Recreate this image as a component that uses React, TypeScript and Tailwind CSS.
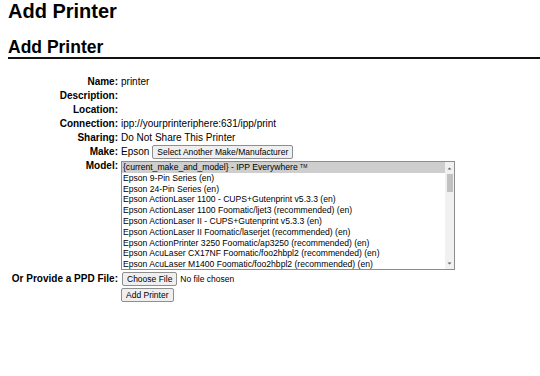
const models = [
  "Epson 9-Pin Series (en)",
  "Epson 24-Pin Series (en)",
  "Epson ActionLaser 1100 - CUPS+Gutenprint v5.3.3 (en)",
  "Epson ActionLaser 1100 Foomatic/ljet3 (recommended) (en)",
  "Epson ActionLaser II - CUPS+Gutenprint v5.3.3 (en)",
  "Epson ActionLaser II Foomatic/laserjet (recommended) (en)",
  "Epson ActionPrinter 3250 Foomatic/ap3250 (recommended) (en)",
  "Epson AcuLaser CX17NF Foomatic/foo2hbpl2 (recommended) (en)",
  "Epson AcuLaser M1400 Foomatic/foo2hbpl2 (recommended) (en)",
];

function Btn({ children }: { children: React.ReactNode }) {
  return (
    <button className="h-[14px] px-[4px] text-[8.5px] leading-[12px] text-black bg-[#efefef] border border-[#8f8f8f] rounded-[2px] whitespace-nowrap">
      {children}
    </button>
  );
}

function Row({ label, children }: { label: string; children?: React.ReactNode }) {
  return (
    <div className="flex h-[14px] items-center">
      <div className="w-[110px] text-right font-bold leading-[14px]">{label}</div>
      <div className="ml-[3px] flex items-center leading-[14px]">{children}</div>
    </div>
  );
}

export default function App() {
  return (
    <div className="w-[540px] h-[376px] overflow-hidden bg-white text-black pl-2 font-['Liberation_Sans',Arial,sans-serif] text-[10px]">
      <h1 className="text-[20px] font-bold leading-[23px]">Add Printer</h1>
      <h2 className="mt-[15px] text-[17.5px] font-bold leading-[19px] border-b-2 border-[#111]">Add Printer</h2>

      <div className="mt-[16px]">
        <Row label="Name:">printer</Row>
        <Row label="Description:" />
        <Row label="Location:" />
        <Row label="Connection:">ipp://yourprinteriphere:631/ipp/print</Row>
        <Row label="Sharing:">Do Not Share This Printer</Row>
        <Row label="Make:">
          <span>Epson</span>
          <span className="ml-[3px] flex">
            <Btn>Select Another Make/Manufacturer</Btn>
          </span>
        </Row>

        {/* model listbox */}
        <div className="flex">
          <div className="w-[110px] text-right font-bold leading-[14px]">Model:</div>
          <div className="ml-[3px] mt-[2px] flex w-[334px] h-[109px] border border-[#8c8c8c] overflow-hidden">
            <div className="flex-1 text-[8.6px] leading-[10.8px] whitespace-nowrap overflow-hidden">
              <div className="bg-[#cecece] px-[1px]">
                {"{current_make_and_model} - IPP Everywhere "}
                <sup className="text-[5px]">TM</sup>
              </div>
              {models.map((m) => (
                <div key={m} className="px-[1px]">
                  {m}
                </div>
              ))}
            </div>
            <div className="w-[9px] bg-[#f1f1f1] flex flex-col items-center">
              <svg width="9" height="9" viewBox="0 0 9 9" className="mt-[2px]">
                <path d="M2.5 5.5 L4.5 3.5 L6.5 5.5 Z" fill="#606060" />
              </svg>
              <div className="mt-[1px] w-[6px] h-[18px] bg-[#c1c1c1]" />
              <div className="flex-1" />
              <svg width="9" height="9" viewBox="0 0 9 9" className="mb-[1px]">
                <path d="M2.5 3.5 L4.5 5.5 L6.5 3.5 Z" fill="#606060" />
              </svg>
            </div>
          </div>
        </div>

        <div className="flex mt-[2px] h-[14px] items-center">
          <div className="w-[110px] text-right font-bold leading-[14px]">Or Provide a PPD File:</div>
          <div className="ml-[4px] flex items-center">
            <Btn>Choose File</Btn>
            <span className="ml-[3px] text-[8.5px]">No file chosen</span>
          </div>
        </div>
        <div className="flex mt-[2px]">
          <div className="w-[110px]" />
          <div className="ml-[3px] flex">
            <Btn>Add Printer</Btn>
          </div>
        </div>
      </div>
    </div>
  );
}
